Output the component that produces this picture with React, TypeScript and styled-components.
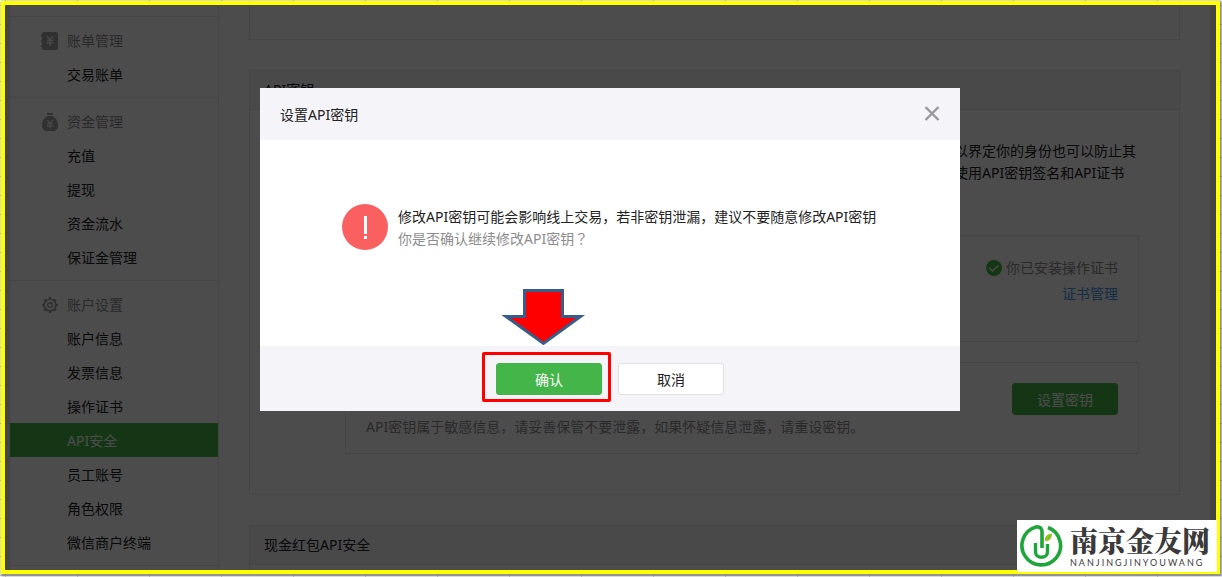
import React from "react";
import styled, { createGlobalStyle } from "styled-components";

const Global = createGlobalStyle`
  * { box-sizing: border-box; }
  html { height: 100%; }
  body {
    margin: 0;
    height: 100%;
    overflow: hidden;
    background-color: #fff;
    background-image:
      linear-gradient(to right, #d0d3da 1px, transparent 1px),
      linear-gradient(to bottom, #d0d3da 1px, transparent 1px);
    background-size: 72px 19px;
    background-position: 5px 5px;
    color: #222;
    font: 14px/22px "Noto Sans", "Noto Sans CJK SC", sans-serif;
  }
  button { font: inherit; }
  h2, p, ul { margin: 0; padding: 0; font-size: 14px; font-weight: 400; }
  ul { list-style: none; }
`;

const Frame = styled.div`
  position: relative;
  height: calc(100vh - 4px);
  margin: 1px 2px 0 1px;
  border: 4px solid #ff0;
  box-shadow: 1px 1px 2px 1px rgba(0, 0, 0, 0.45);
  overflow: hidden;
`;

const Page = styled.div`
  display: flex;
  min-height: 100%;
  background: #fff;
  border: solid #e7e8eb;
  border-width: 0 6px 0 5px;
`;

const Sidebar = styled.nav`
  flex: none;
  width: 209px;
  padding-top: 11px;
  border-right: 1px solid #e7e7eb;
`;

const Group = styled.section`
  padding: 6px 0;
  border-top: 1px solid #e7e7eb;
  &:last-child { border-bottom: 1px solid #e7e7eb; }
`;

const GroupTitle = styled.h2`
  display: flex;
  align-items: center;
  gap: 8px;
  padding: 2px 0 0 31px;
  line-height: 32px;
  color: #8d8d8d;
`;

const NavLink = styled.a<{ $active?: boolean }>`
  display: block;
  padding: 2px 0 0 57px;
  line-height: 32px;
  text-decoration: none;
  color: ${(p) => (p.$active ? "#fff" : "#222")};
  background: ${(p) => (p.$active ? "#44b549" : "transparent")};
`;

const Main = styled.main`
  flex: 1;
  min-width: 0;
  display: flex;
  flex-direction: column;
  gap: 30px;
  padding: 0 30px;
`;

const Panel = styled.section`
  border: 1px solid #e7e7eb;
`;

const PanelTail = styled.div`
  height: 35px;
  border: solid #e7e7eb;
  border-width: 0 1px 1px;
`;

const PanelTitle = styled.h2`
  padding: 0 14px;
  line-height: 38px;
  background: #f4f4f9;
  border-bottom: 1px solid #e7e7eb;
`;

const PanelBody = styled.div`
  display: flex;
  flex-direction: column;
  gap: 20px;
  min-height: 20px;
  padding: 30px 40px 40px 95px;
`;

const Intro = styled.p`
  align-self: flex-end;
  width: 185px;
  margin-bottom: 31px;
  white-space: nowrap;
`;

const IntroLine = styled.span`
  display: block;
`;

const Card = styled.div`
  display: flex;
  justify-content: space-between;
  border: 1px solid #e7e7eb;
  padding: 20px 20px 15px;
`;

const CertStatus = styled.div`
  display: flex;
  flex-direction: column;
  align-items: flex-end;
  gap: 4px;
  min-height: 70px;
  margin-left: auto;
  padding-top: 1px;
  color: #8d8d8d;
  a { color: #459ae9; text-decoration: none; }
`;

const Installed = styled.span`
  display: flex;
  align-items: center;
  gap: 4px;
`;

const Hint = styled.p`
  padding-top: 33px;
  color: #8d8d8d;
`;

/* Full-width question mark, centred in its cell. */
const Punct = styled.span`
  font-family: "Noto Sans CJK TC", sans-serif;
  line-height: 1;
`;

const Button = styled.button<{ $primary?: boolean }>`
  display: block;
  width: 106px;
  height: 32px;
  padding: 2px 0 0;
  line-height: 28px;
  border: 1px solid ${(p) => (p.$primary ? "#44b549" : "#e0e1e5")};
  border-radius: 3px;
  background: ${(p) => (p.$primary ? "#44b549" : "#fff")};
  color: ${(p) => (p.$primary ? "#fff" : "#222")};
`;

const Overlay = styled.div`
  position: absolute;
  inset: 0;
  display: flex;
  justify-content: center;
  align-items: flex-start;
  padding: 83px 1px 0 0;
  background: rgba(0, 0, 0, 0.7);
`;

const Dialog = styled.div`
  width: 700px;
  background: #fff;
`;

const DialogHeader = styled.header`
  display: flex;
  align-items: center;
  justify-content: space-between;
  height: 52px;
  padding: 0 20px;
  background: #f4f4f9;
`;

const DialogTitle = styled.h2`
  padding-top: 2px;
`;

const CloseButton = styled.button`
  display: flex;
  padding: 0;
  border: 0;
  background: none;
`;

const DialogBody = styled.div`
  display: flex;
  align-items: flex-start;
  gap: 10px;
  min-height: 206px;
  padding: 64px 80px 0 82px;
`;

const Message = styled.div`
  padding-top: 2px;
`;

const Muted = styled.p`
  color: #8d8d8d;
`;

const DialogFooter = styled.footer`
  display: flex;
  justify-content: center;
  gap: 16px;
  padding: 17px 0 16px;
  background: #f4f4f9;
`;

const Highlighted = styled.div`
  position: relative;
`;

const HighlightBox = styled.span`
  position: absolute;
  inset: -11px -9px -7px -14px;
  border: 3px solid #f00;
  border-radius: 2px;
  pointer-events: none;
`;

const Arrow = styled.svg`
  position: absolute;
  left: 3px;
  bottom: 49px;
  pointer-events: none;
`;

const Watermark = styled.aside`
  position: absolute;
  right: 5px;
  bottom: 5px;
  display: flex;
  align-items: center;
  gap: 6px;
  width: 200px;
  height: 52px;
  padding-left: 3px;
  background: #fff;
  color: #3a3a3a;
`;

const Brand = styled.div`
  font-family: "Noto Serif CJK SC", "Noto Sans CJK SC", serif;
  font-size: 28px;
  font-weight: 900;
  line-height: 34px;
`;

const BrandLatin = styled.div`
  font-family: Lato, sans-serif;
  font-size: 9px;
  line-height: 12px;
  letter-spacing: 2px;
`;

const BillIcon = () => (
  <svg width="18" height="18" viewBox="0 0 18 18" aria-hidden="true">
    <rect x="1" y="0" width="16" height="18" rx="2" fill="#a0a0a0" />
    <path d="M0 4h2M0 9h2M0 14h2" stroke="#a0a0a0" strokeWidth="2" />
    <path d="M6 4l3 4 3-4M9 8v6M5.500 8.500h7M5.500 11h7" stroke="#e8e8e8" strokeWidth="1.500" fill="none" />
  </svg>
);

const MoneyIcon = () => (
  <svg width="18" height="18" viewBox="0 0 18 18" aria-hidden="true">
    <path d="M6 0h6v2H6z" fill="#a0a0a0" />
    <path d="M6.500 3h5C15 5 17 8 17 12c0 4-2 6-5 6H6c-3 0-5-2-5-6 0-4 2-7 5.500-9z" fill="#a0a0a0" />
    <path d="M6.500 7L9 10.500 11.500 7M9 10v5.500M6 10.500h6M6 13h6" stroke="#e8e8e8" strokeWidth="1.300" fill="none" />
  </svg>
);

const GearIcon = () => (
  <svg width="18" height="18" viewBox="0 0 18 18" fill="none" stroke="#a0a0a0" aria-hidden="true">
    <circle cx="9" cy="9" r="5.800" strokeWidth="1.600" />
    <circle cx="9" cy="9" r="2.300" strokeWidth="1.400" />
    <path
      d="M9 1v2.500M9 14.500V17M1 9h2.500M14.500 9H17M3.300 3.300l1.800 1.800M12.900 12.900l1.800 1.800M3.300 14.700l1.800-1.800M12.900 5.100l1.800-1.800"
      strokeWidth="2.400"
    />
  </svg>
);

const groups = [
  { title: "账单管理", icon: <BillIcon />, items: ["交易账单"] },
  { title: "资金管理", icon: <MoneyIcon />, items: ["充值", "提现", "资金流水", "保证金管理"] },
  {
    title: "账户设置",
    icon: <GearIcon />,
    items: ["账户信息", "发票信息", "操作证书", "API安全", "员工账号", "角色权限", "微信商户终端"],
  },
];

export default function App() {
  return (
    <>
      <Global />
      <Frame>
        <Page>
          <Sidebar>
            {groups.map((g) => (
              <Group key={g.title}>
                <GroupTitle>
                  {g.icon}
                  {g.title}
                </GroupTitle>
                <ul>
                  {g.items.map((item) => (
                    <li key={item}>
                      <NavLink href="#" $active={item === "API安全"}>
                        {item}
                      </NavLink>
                    </li>
                  ))}
                </ul>
              </Group>
            ))}
          </Sidebar>
          <Main>
            <PanelTail />
            <Panel>
              <PanelTitle>API密钥</PanelTitle>
              <PanelBody>
                <Intro>
                  <IntroLine>以界定你的身份也可以防止其</IntroLine>
                  <IntroLine>使用API密钥签名和API证书</IntroLine>
                </Intro>
                <Card>
                  <CertStatus>
                    <Installed>
                      <svg width="16" height="16" viewBox="0 0 16 16" aria-hidden="true">
                        <circle cx="8" cy="8" r="8" fill="#44b549" />
                        <path d="M3.500 8l3 3 6-5.500" stroke="#fff" strokeWidth="1.300" fill="none" />
                      </svg>
                      你已安装操作证书
                    </Installed>
                    <a href="#">证书管理</a>
                  </CertStatus>
                </Card>
                <Card>
                  <Hint>API密钥属于敏感信息，请妥善保管不要泄露，如果怀疑信息泄露，请重设密钥。</Hint>
                  <Button type="button" $primary>
                    设置密钥
                  </Button>
                </Card>
              </PanelBody>
            </Panel>
            <Panel>
              <PanelTitle>现金红包API安全</PanelTitle>
              <PanelBody />
            </Panel>
          </Main>
        </Page>
        <Overlay>
          <Dialog role="dialog" aria-modal="true" aria-labelledby="dialog-title">
            <DialogHeader>
              <DialogTitle id="dialog-title">设置API密钥</DialogTitle>
              <CloseButton type="button" aria-label="关闭">
                <svg width="16" height="16" viewBox="0 0 16 16" aria-hidden="true">
                  <path d="M1.500 1l13 13M14.500 1l-13 13" stroke="#999" strokeWidth="2.400" />
                </svg>
              </CloseButton>
            </DialogHeader>
            <DialogBody>
              <svg width="46" height="46" viewBox="0 0 46 46" aria-hidden="true">
                <circle cx="23" cy="23" r="23" fill="#fa6060" />
                <path d="M22 12h3v18h-3zM22 32h3v3h-3z" fill="#fff" />
              </svg>
              <Message>
                <p>修改API密钥可能会影响线上交易，若非密钥泄漏，建议不要随意修改API密钥</p>
                <Muted>
                  你是否确认继续修改API密钥<Punct>？</Punct>
                </Muted>
              </Message>
            </DialogBody>
            <DialogFooter>
              <Highlighted>
                <Button type="button" $primary>
                  确认
                </Button>
                <HighlightBox />
                <Arrow width="88" height="58" viewBox="0 0 88 58" aria-hidden="true">
                  <path
                    d="M25.500 2.500h38v26h18L44.500 55.500 7 28.500h18.500z"
                    fill="#f00"
                    stroke="#385d8a"
                    strokeWidth="3"
                  />
                </Arrow>
              </Highlighted>
              <Button type="button">取消</Button>
            </DialogFooter>
          </Dialog>
        </Overlay>
      </Frame>
      <Watermark>
        <svg width="44" height="44" viewBox="0 0 44 44" fill="none" aria-hidden="true">
          <path
            d="M28 3.500A19.300 19.300 0 1 1 16 3c4-.8 6 1.500 6 5v16"
            stroke="#1fa63a"
            strokeWidth="3.600"
            strokeLinejoin="round"
          />
          <path d="M15.500 19v9c0 7 12 7 12 0v-8" stroke="#1fa63a" strokeWidth="3.400" />
          <path d="M25 17c-.5-5 2.500-7 7-7.500 0 5-2.500 7.500-7 7.500z" fill="#8cc21f" />
        </svg>
        <div>
          <Brand>南京金友网</Brand>
          <BrandLatin>NANJINGJINYOUWANG</BrandLatin>
        </div>
      </Watermark>
    </>
  );
}
